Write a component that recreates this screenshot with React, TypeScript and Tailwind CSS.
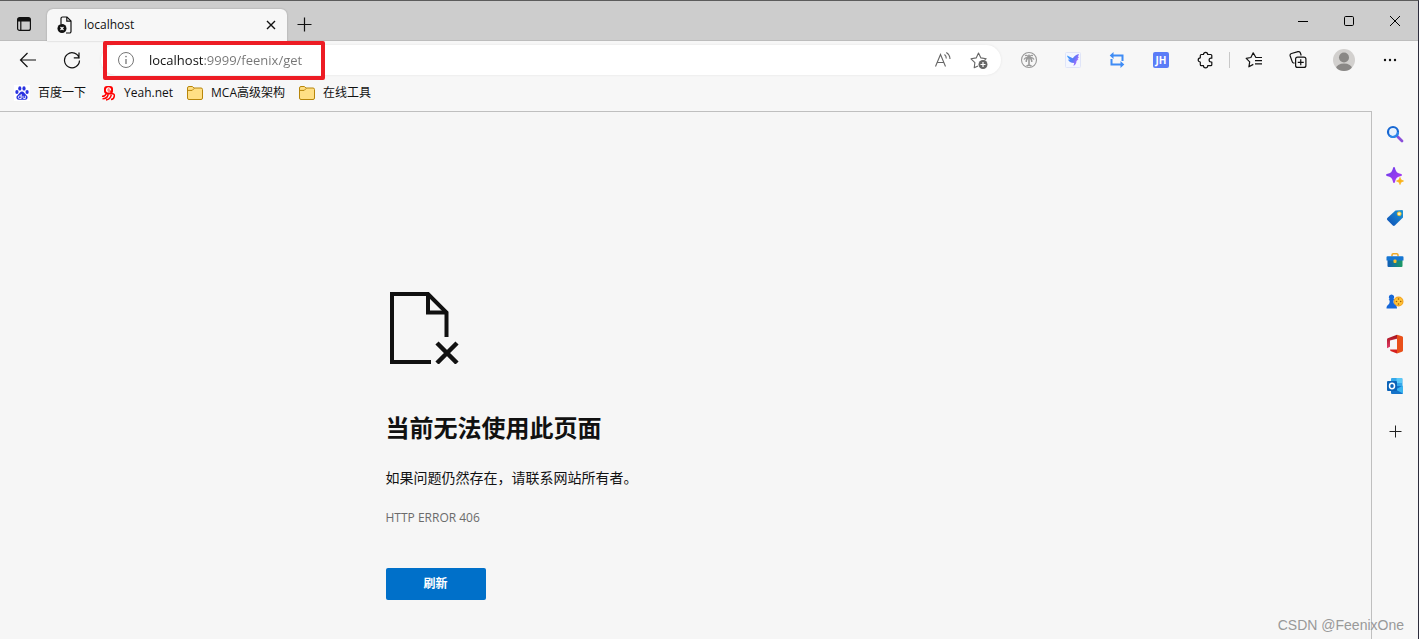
import React, { useState } from 'react';

interface IconButtonProps {
  label: string;
  className?: string;
  children: React.ReactNode;
}

const IconButton: React.FC<IconButtonProps> = ({ label, className = 'w-11 h-9', children }) => (
  <button
    type="button"
    aria-label={label}
    className={`flex shrink-0 items-center justify-center hover:bg-black/5 ${className}`}
  >
    {children}
  </button>
);

const FolderIcon = () => (
  <svg width="16" height="16" viewBox="0 0 16 16">
    <path d="M.5 3a1.5 1.5 0 0 1 1.5-1.5h3.3L7 3h7a1.5 1.5 0 0 1 1.5 1.5V13a1.5 1.5 0 0 1-1.5 1.5H2A1.5 1.5 0 0 1 .5 13z" fill="#ffdf84" stroke="#b8860b" />
    <path d="M1 5.4h4.2L7.2 3.4" fill="none" stroke="#b8860b" />
  </svg>
);

const BaiduIcon = () => (
  <svg width="16" height="16" viewBox="0 0 16 16">
    <rect width="16" height="16" fill="#fff" />
    <g fill="#2932e1">
      <ellipse cx="2.9" cy="7" rx="1.6" ry="2.1" />
      <ellipse cx="5.8" cy="3.4" rx="1.6" ry="2.2" />
      <ellipse cx="10" cy="3.4" rx="1.6" ry="2.2" />
      <ellipse cx="13.1" cy="7" rx="1.6" ry="2.1" />
      <path d="M8 6.600c-2 0-2.600 2-4 3.200-1.500 1.200-1.900 2.400-1.300 3.800.8 1.700 3 1.200 5.300 1.200s4.500.5 5.300-1.200c.6-1.400.2-2.600-1.300-3.800C10.600 8.600 10 6.600 8 6.600z" />
    </g>
    <path d="M7.200 9v4.500H5.600a1.200 1.200 0 0 1 0-2.600h1.600M9 10.800v1.800q0 .9 1 .9h1.300v-2.700" fill="none" stroke="#fff" strokeWidth=".9" />
  </svg>
);

const YeahIcon = () => (
  <svg width="16" height="16" viewBox="0 0 16 16" fill="none">
    <rect x="4" y="1" width="9" height="8" rx="3" fill="#f00" />
    <path d="M6.500 5h4c0-1.500-.8-2.200-2-2.200s-2 .8-2 2.200.8 2 2 2h1.800" stroke="#fff" strokeWidth="1.200" />
    <path d="M2 11.300c2 .2 3.500-.8 4.200-2.600h6.300c1.500 0 2 1 1.800 2.500-.3 2-1.300 3.300-3.300 3.300M8.200 9.500c-.6 2.500-2.600 4.300-5.700 4.300M11.300 9.800c-.6 2.600-2.300 4.700-5.300 5.200" stroke="#f00" strokeWidth="1.500" />
  </svg>
);

const bookmarks = [
  { name: '百度一下', icon: <BaiduIcon /> },
  { name: 'Yeah.net', icon: <YeahIcon /> },
  { name: 'MCA高级架构', icon: <FolderIcon /> },
  { name: '在线工具', icon: <FolderIcon /> },
];

const TabStrip = () => (
  <div className="flex h-10 items-end border-b border-[#bdbdbd] bg-[#cdcdcd]">
    <IconButton label="标签页操作菜单" className="ml-1 mr-[3px] h-8 w-10">
      <svg width="16" height="16" viewBox="0 0 16 16" fill="none" stroke="#111" strokeWidth="1.200">
        <rect x="1.600" y="1.600" width="12.800" height="12.800" rx="2" />
        <path d="M2 3h12M2 4.500h12" strokeWidth="2" />
        <path d="M4.800 5v9" />
      </svg>
    </IconButton>
    <div className="-mb-px flex h-8 w-60 items-center rounded-t-md bg-[#f7f7f7] pl-2.5 pr-2 shadow-[0_0_2px_rgba(0,0,0,0.25)]">
      <svg width="16" height="18" viewBox="0 0 16 18" fill="none">
        <path d="M4 8V2.500A1.500 1.500 0 0 1 5.500 1H10l4 4v10.500A1.500 1.500 0 0 1 12.500 17H9" stroke="#111" strokeWidth="1.200" />
        <path d="M9.800 1v4.200H14" stroke="#111" strokeWidth="1.200" />
        <circle cx="5" cy="12.500" r="4.500" fill="#111" />
        <path d="M3.500 11l3 3M6.500 11l-3 3" stroke="#fff" strokeWidth="1.100" />
      </svg>
      <span className="ml-[11px] flex-1 text-[12px]">localhost</span>
      <IconButton label="关闭标签页" className="h-5 w-[17px]">
        <svg width="10" height="10" viewBox="0 0 10 10" stroke="#111" strokeWidth="1.400">
          <path d="M1 1l8 8M9 1L1 9" />
        </svg>
      </IconButton>
    </div>
    <IconButton label="新建标签页" className="h-8 w-[34px]">
      <svg width="15" height="15" viewBox="0 0 15 15" stroke="#111" strokeWidth="1.200">
        <path d="M7.500 .5v14M.5 7.500h14" />
      </svg>
    </IconButton>
    <div className="ml-auto flex self-stretch">
      <IconButton label="最小化" className="h-10 w-[46px]">
        <svg width="10" height="10" viewBox="0 0 10 10" stroke="#000">
          <path d="M0 5.500h10" />
        </svg>
      </IconButton>
      <IconButton label="最大化" className="h-10 w-[46px]">
        <svg width="10" height="10" viewBox="0 0 10 10" fill="none" stroke="#000">
          <rect x=".5" y=".5" width="9" height="9" rx="1.200" />
        </svg>
      </IconButton>
      <IconButton label="关闭" className="h-10 w-[46px]">
        <svg width="10" height="10" viewBox="0 0 10 10" stroke="#000">
          <path d="M0 0l10 10M10 0L0 10" />
        </svg>
      </IconButton>
    </div>
  </div>
);

const AddressBar = () => {
  const [url, setUrl] = useState('localhost:9999/feenix/get');

  return (
    <div className="relative ml-[7px] flex h-[30px] flex-1 items-center rounded-full bg-white pl-4 pr-1 shadow-[0_0_3px_rgba(0,0,0,0.08)]">
      <svg width="18" height="18" viewBox="0 0 18 18" fill="none" stroke="#767676">
        <circle cx="9" cy="9" r="7.500" />
        <path d="M9 8v5" strokeWidth="1.300" />
        <circle cx="9" cy="5.600" r=".8" fill="#767676" stroke="none" />
      </svg>
      {/* host part is dark, the rest of the url is grey */}
      <input
        type="text"
        aria-label="地址和搜索栏"
        value={url}
        onChange={(e) => setUrl(e.target.value)}
        className="ml-3.5 min-w-0 flex-1 bg-[linear-gradient(to_right,#111_54px,#757575_54px)] bg-clip-text pt-0.5 text-[13px] text-transparent caret-black outline-none"
      />
      <IconButton label="大声朗读此页面" className="h-7 w-9">
        <svg width="18" height="18" viewBox="0 0 18 18" fill="none" stroke="#666" strokeWidth="1.100">
          <path d="M1.500 15.500L6.500 3.500l5 12M3.200 11.500h6.600" />
          <path d="M10.500 3.500a5 5 0 0 1 1.800 4M12.300 1.500a8 8 0 0 1 3.700 6.500" />
        </svg>
      </IconButton>
      <IconButton label="将此页面添加到收藏夹" className="h-7 w-9">
        <svg width="18" height="18" viewBox="0 0 18 18" fill="none">
          <path d="M8 15l-3.800 1.800.7-5.200L1 7.800l5.200-.9L8.500 2l2.400 4.900 5.300.8-1.700 1.600" stroke="#666" strokeWidth="1.100" strokeLinejoin="round" />
          <circle cx="13" cy="13.500" r="4.500" fill="#666" />
          <path d="M13 11v5M10.500 13.500h5" stroke="#fff" strokeWidth="1.200" />
        </svg>
      </IconButton>
      {/* Highlight frame */}
      <div className="pointer-events-none absolute -top-1 left-0.5 h-[39px] w-[222px] rounded-xs border-4 border-[#ed1c24]" />
    </div>
  );
};

const Toolbar = () => (
  <div className="flex h-[38px] items-center pl-1.5 pr-1.5">
    <IconButton label="返回">
      <svg width="18" height="16" viewBox="0 0 18 16" fill="none" stroke="#111" strokeWidth="1.200">
        <path d="M17 8H1.500M8.500 1l-7 7 7 7" />
      </svg>
    </IconButton>
    <IconButton label="刷新">
      <svg width="18" height="18" viewBox="0 0 18 18" fill="none" stroke="#111" strokeWidth="1.200">
        <path d="M16.300 7.500A7.500 7.500 0 1 0 16.500 9.500M16 1.500v5.300h-5.200" />
      </svg>
    </IconButton>
    <AddressBar />
    <div className="ml-1.5 flex">
      <IconButton label="棕榈树扩展">
        <svg width="18" height="18" viewBox="0 0 18 18" fill="none" stroke="#999">
          <circle cx="9" cy="9" r="7.500" strokeWidth="1.100" />
          <path d="M9 6.500c-1-2-2.500-2.500-4-1.800M9 6.500c1-2 2.500-2.500 4-1.800M9 6.500C6.500 6 4.800 6.800 4 8.500M9 6.500c2.500-.5 4.200.3 5 2M9 6.500c-2 .8-3 2.300-2.800 4.500M9 6.500c2 .8 3 2.300 2.800 4.500M9 6.500v-3" strokeWidth="1.400" />
          <path d="M9 6.500v8M6.500 15l2.500-1 2.500 1" strokeWidth="1.600" />
        </svg>
      </IconButton>
      <IconButton label="飞鸟扩展">
        <svg width="16" height="16" viewBox="0 0 16 16">
          <defs>
            <linearGradient id="bird" x1="0" y1="0" x2="1" y2=".5">
              <stop stopColor="#2fa4ff" />
              <stop offset=".6" stopColor="#5b78f7" />
              <stop offset="1" stopColor="#b06bff" />
            </linearGradient>
          </defs>
          <rect x=".5" y=".5" width="15" height="15" rx="1" fill="#f3f6ff" stroke="#e0e5f8" />
          <path d="M2 3.500l5.800 2.800C9.300 3.800 11.500 2.500 14 2l-1 2.800 1 .2-1.500 2 1 .3-2 1.700c0 2.300-1 4-3 5l.7-3C5.800 10.800 3.500 9.500 3 7.500l2 .2C3.500 6.600 2.300 5 2 3.500z" fill="url(#bird)" />
        </svg>
      </IconButton>
      <IconButton label="循环扩展">
        <svg width="16" height="16" viewBox="0 0 16 16" fill="none" stroke="#3f8cf5" strokeWidth="2">
          <path d="M4 3.500h9.500V9M12 12.500H2.500V7" />
          <path d="M4.500 0v7L.7 3.500zM11.500 9v7l3.800-3.500z" fill="#3f8cf5" stroke="none" />
        </svg>
      </IconButton>
      <IconButton label="JSON Handle">
        <span className="flex h-4 w-4 items-center justify-center rounded-xs bg-[#5b7cf7] text-[10px] font-bold leading-none text-white">
          JH
        </span>
      </IconButton>
      <IconButton label="扩展">
        <svg width="18" height="18" viewBox="0 0 18 18" fill="none" stroke="#111" strokeWidth="1.200" strokeLinejoin="round">
          <path d="M7.500 3.500a2.100 2.100 0 0 1 4.200 0h3.100a1 1 0 0 1 1 1v2.700h-.8a1.900 1.900 0 0 0 0 3.800h.8v2.700a1 1 0 0 1-1 1h-3.100a2.100 2.100 0 0 1-4.200 0H5.300a1 1 0 0 1-1-1v-2.700a2.100 2.100 0 0 1 0-4.200V4.500a1 1 0 0 1 1-1z" />
        </svg>
      </IconButton>
    </div>
    <div className="mx-0.5 h-4 w-px bg-[#c8c8c8]" />
    <IconButton label="收藏夹">
      <svg width="18" height="18" viewBox="0 0 18 18" fill="none" stroke="#111" strokeWidth="1.200" strokeLinejoin="round">
        <path d="M11.200 6.500h-.3L8.200 1.800 5.900 6.500l-4.700.8 3.500 3.500-.8 5 4.400-2.400" />
        <path d="M11 6.500h6M10 9.700h7M10 12.900h7" />
      </svg>
    </IconButton>
    <IconButton label="集锦">
      <svg width="18" height="18" viewBox="0 0 18 18" fill="none" stroke="#111" strokeWidth="1.200">
        <path d="M5.500 12.200l-.9-.2a2 2 0 0 1-1.400-1.400L1.200 5a2 2 0 0 1 1.300-2.500l6.500-1.800a2 2 0 0 1 2.400 1.300l.8 2.500" />
        <rect x="6.600" y="6.100" width="10.300" height="10.300" rx="2" fill="#f7f7f7" />
        <path d="M11.750 8.300v6M8.750 11.300h6" />
      </svg>
    </IconButton>
    <IconButton label="个人资料" className="h-9 w-12">
      <svg width="22" height="22" viewBox="0 0 22 22">
        <defs>
          <clipPath id="avatar">
            <circle cx="11" cy="11" r="11" />
          </clipPath>
        </defs>
        <g clipPath="url(#avatar)">
          <rect width="22" height="22" fill="#d2d0ce" />
          <circle cx="11" cy="8.500" r="5" fill="#8a8886" />
          <ellipse cx="11" cy="19.500" rx="8" ry="5" fill="#8a8886" />
        </g>
      </svg>
    </IconButton>
    <IconButton label="设置及其他">
      <svg width="14" height="4" viewBox="0 0 14 4" fill="#111">
        <circle cx="2" cy="2" r="1.200" />
        <circle cx="7" cy="2" r="1.200" />
        <circle cx="12" cy="2" r="1.200" />
      </svg>
    </IconButton>
  </div>
);

const BookmarksBar = () => (
  <nav className="flex h-8 items-center gap-3.5 pb-1 pl-3.5 text-[12px]">
    {bookmarks.map((bookmark) => (
      <a key={bookmark.name} href="#" className="flex items-center gap-2 whitespace-nowrap">
        {bookmark.icon}
        {bookmark.name}
      </a>
    ))}
  </nav>
);

const sidebarItems = [
  {
    name: '搜索',
    icon: (
      <svg width="18" height="18" viewBox="0 0 18 18" fill="none">
        <path d="M11 11l5 5" stroke="#8b4fd9" strokeWidth="2.800" strokeLinecap="round" />
        <circle cx="7" cy="7" r="5" fill="#e8f2fd" stroke="#1767d2" strokeWidth="2.200" />
        <path d="M3.500 10.500A5 5 0 0 0 12 7" stroke="#2a86ea" strokeWidth="2.200" />
      </svg>
    ),
  },
  {
    name: '发现',
    icon: (
      <svg width="18" height="18" viewBox="0 0 18 18">
        <defs>
          <linearGradient id="spark" x1="0" y1="0" x2="1" y2="1">
            <stop stopColor="#6a3de8" />
            <stop offset="1" stopColor="#b23cf5" />
          </linearGradient>
        </defs>
        <path d="M8 1C9 5.500 10.500 7 15 8 10.500 9 9 10.500 8 15 7 10.500 5.500 9 1 8 5.500 7 7 5.500 8 1z" fill="url(#spark)" stroke="url(#spark)" strokeWidth="1.800" strokeLinejoin="round" />
        <path d="M14 10.500c.5 2.300 1 2.800 3.500 3.500-2.500.7-3 1.200-3.500 3.500-.5-2.300-1-2.800-3.500-3.500 2.500-.7 3-1.200 3.500-3.500z" fill="#fbb114" stroke="#fbb114" strokeWidth=".8" />
      </svg>
    ),
  },
  {
    name: '购物',
    icon: (
      <svg width="18" height="18" viewBox="0 0 18 18">
        <defs>
          <linearGradient id="tag" x1="0" y1="1" x2="1" y2="0">
            <stop stopColor="#0f4db5" />
            <stop offset="1" stopColor="#1c98d8" />
          </linearGradient>
        </defs>
        <path d="M9.500 1.500L16 1a1 1 0 0 1 1 1v6.500L8.800 16.600a1.500 1.500 0 0 1-2 0L1.300 11a1.500 1.500 0 0 1 0-2z" fill="url(#tag)" />
        <circle cx="13.200" cy="4.800" r="1.900" fill="#fff3b8" stroke="#f7c21b" strokeWidth=".9" />
      </svg>
    ),
  },
  {
    name: '工具',
    icon: (
      <svg width="18" height="18" viewBox="0 0 18 18">
        <defs>
          <linearGradient id="toolbox">
            <stop stopColor="#0f5cb8" />
            <stop offset="1" stopColor="#1d9b63" />
          </linearGradient>
        </defs>
        <path d="M6 5.500V4a1.200 1.200 0 0 1 1.200-1.200h3.600A1.200 1.200 0 0 1 12 4v1.500" fill="none" stroke="#f0a928" strokeWidth="1.500" />
        <path d="M1.500 8h15v7a1 1 0 0 1-1 1h-13a1 1 0 0 1-1-1z" fill="url(#toolbox)" />
        <path d="M1.500 5.200h15a1 1 0 0 1 1 1V9.500H.5V6.200a1 1 0 0 1 1-1z" fill="#1676d2" />
        <rect x="7.500" y="8.500" width="3" height="3.500" rx="1" fill="#fbc02d" />
      </svg>
    ),
  },
  {
    name: '游戏',
    icon: (
      <svg width="18" height="18" viewBox="0 0 18 18">
        <circle cx="12.500" cy="8.500" r="5" fill="#f5a623" />
        <circle cx="12.500" cy="8.500" r="3.800" fill="#ffc53a" />
        <g fill="#a35b00">
          <circle cx="12.500" cy="6" r=".8" />
          <circle cx="10.500" cy="8.500" r=".8" />
          <circle cx="14.700" cy="8.500" r=".8" />
          <circle cx="12.500" cy="11" r=".8" />
        </g>
        <path d="M5.500 1.500a2.700 2.700 0 0 1 2 4.500l.8.800-1 1c0 2 .6 3 1.800 4 1.400.8 1.900 1.700 1.900 3.700H.5c0-2 .5-2.900 1.700-3.700 1.200-1 1.500-2 1.500-4l-1-1L3.500 6a2.700 2.700 0 0 1 2-4.500z" fill="#1667d8" />
      </svg>
    ),
  },
  {
    name: 'Microsoft 365',
    icon: (
      <svg width="18" height="20" viewBox="0 0 18 20">
        <defs>
          <linearGradient id="office" x1="0" y1="0" x2="0" y2="1">
            <stop stopColor="#a51318" />
            <stop offset="1" stopColor="#e23d6b" />
          </linearGradient>
        </defs>
        <path d="M11 .8L1.800 4.300A1.500 1.500 0 0 0 1 5.700v8.500l3-1.400V6.500l7-1.800z" fill="url(#office)" />
        <path d="M4 15.500h7v4L4.500 17z" fill="#d6201f" />
        <path d="M11 .8l5 1.500a1.400 1.400 0 0 1 1 1.300v12.800a1.400 1.400 0 0 1-1 1.300l-5 1.800z" fill="#e9501a" />
      </svg>
    ),
  },
  {
    name: 'Outlook',
    icon: (
      <svg width="18" height="18" viewBox="0 0 18 18" fill="none">
        <rect x="5" y="1" width="11.500" height="9" rx="1" fill="#35a8ea" />
        <path d="M10.500 1H16v5h-5.500z" fill="#5bc9f7" />
        <path d="M5 9h12v7a1 1 0 0 1-1 1H6a1 1 0 0 1-1-1z" fill="#1473c9" />
        <path d="M17 8.500v8L9.500 12.500z" fill="#3ab5f0" />
        <rect x="1" y="4" width="10" height="10" rx="1" fill="#0c63b8" />
        <ellipse cx="6" cy="9" rx="2.500" ry="2.700" stroke="#fff" strokeWidth="1.500" />
      </svg>
    ),
  },
];

const Sidebar = () => (
  <aside className="flex w-[46px] shrink-0 flex-col pt-0.5">
    {sidebarItems.map((item) => (
      <IconButton key={item.name} label={item.name} className="h-[42px] w-full">
        {item.icon}
      </IconButton>
    ))}
    <IconButton label="自定义" className="mt-1 h-10 w-full">
      <svg width="13" height="13" viewBox="0 0 13 13" stroke="#222">
        <path d="M6.500 .5v12M.5 6.500h12" />
      </svg>
    </IconButton>
  </aside>
);

const ErrorPage = () => (
  <main className="flex-1 border-r border-t border-[#bfbfbf] bg-[#f6f6f6]">
    <div className="mx-auto flex max-w-[600px] flex-col items-start pt-[180px] text-[#111]">
      <svg className="ml-[3px]" width="70" height="72" viewBox="0 0 70 72" fill="none" stroke="#111" strokeWidth="4">
        <path d="M42 70H3V2h36l18.500 18.500V45" />
        <path d="M39 2v18.500h18.500" />
        <path d="M48 51l20 20M68 51L48 71" strokeWidth="4.500" />
      </svg>
      <h1 className="mt-12 text-2xl font-bold">当前无法使用此页面</h1>
      <p className="mt-6 text-sm">如果问题仍然存在，请联系网站所有者。</p>
      <p className="mt-5 text-[12px] font-medium leading-5 text-[#6b6b6b]">HTTP ERROR 406</p>
      <button
        type="button"
        className="mt-10 h-8 w-[100px] rounded-xs bg-[#0070c9] text-[12px] font-bold text-white"
      >
        刷新
      </button>
    </div>
  </main>
);

export default function App() {
  return (
    <div className="relative flex min-h-screen flex-col border-r border-t border-r-[#2d2d3d] border-t-[#5c5c5c] bg-[#f7f7f7] font-['Open_Sans','Noto_Sans_CJK_SC',sans-serif] text-[#111]">
      <header>
        <TabStrip />
        <Toolbar />
        <BookmarksBar />
      </header>
      <div className="flex flex-1">
        <ErrorPage />
        <Sidebar />
      </div>
      <span className="absolute bottom-1 right-3.5 font-['Liberation_Sans',sans-serif] text-sm text-[#999]">
        CSDN @FeenixOne
      </span>
    </div>
  );
}
